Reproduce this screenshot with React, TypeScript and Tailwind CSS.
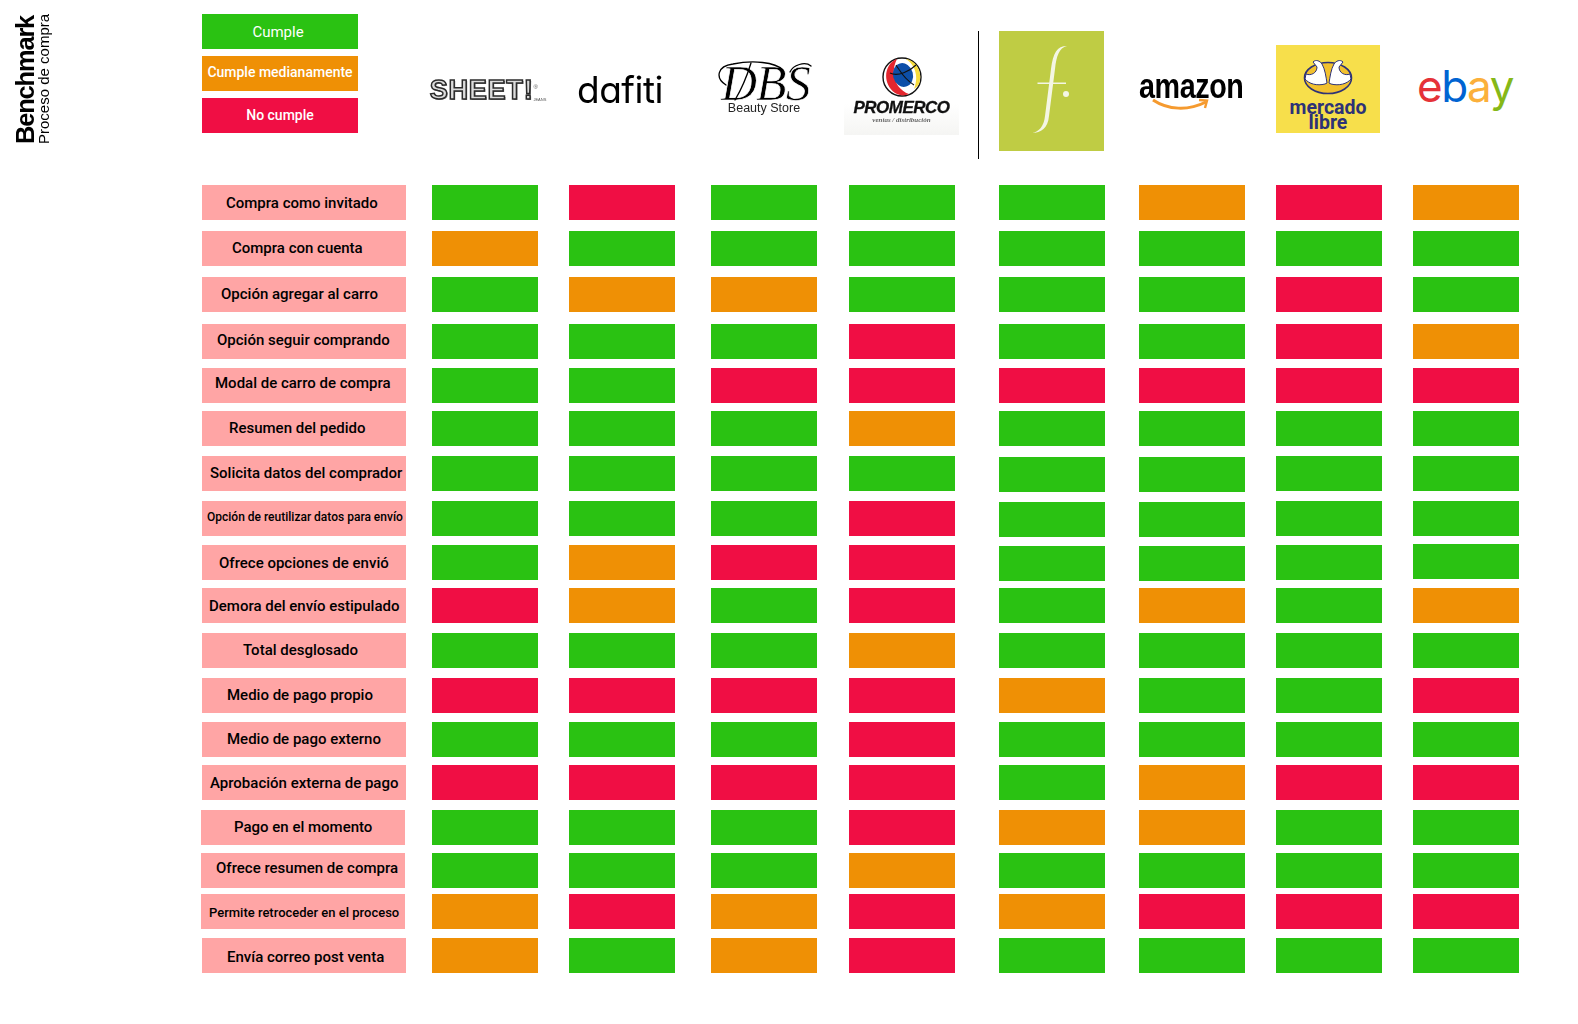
import React from 'react';

type Status = 'G' | 'O' | 'R';

const statusBg: Record<Status, string> = {
  G: 'bg-[#2AC212]',
  O: 'bg-[#EF9005]',
  R: 'bg-[#F00E44]',
};

// margin left of each brand column, they are not evenly spaced
const colGaps = ['ml-[26px]', 'ml-[31px]', 'ml-[36px]', 'ml-[32px]', 'ml-[44px]', 'ml-[34px]', 'ml-[31px]', 'ml-[31px]'];

type Row = {
  label: string;
  top: string;
  text: string;
  cells: string;
  left?: string;
  nudge?: Record<number, string>;
};

const rows: Row[] = [
  { label: 'Compra como invitado', top: 'mt-0', text: 'pl-[24px] pt-[2px] text-[15px]', cells: 'GRGGGORO' },
  { label: 'Compra con cuenta', top: 'mt-[11px]', text: 'pl-[30px] text-[15px]', cells: 'OGGGGGGG' },
  { label: 'Opción agregar al carro', top: 'mt-[11px]', text: 'pl-[19px] pb-[1px] text-[15px]', cells: 'GOOGGGRG' },
  { label: 'Opción seguir comprando', top: 'mt-[12px]', text: 'pl-[15px] pb-[2px] text-[15px]', cells: 'GGGRGGRO' },
  { label: 'Modal de carro de compra', top: 'mt-[9px]', text: 'pl-[13px] pb-[5px] text-[15px]', cells: 'GGRRRRRR' },
  { label: 'Resumen del pedido', top: 'mt-[8px]', text: 'pl-[27px] text-[15px]', cells: 'GGGOGGGG' },
  { label: 'Solicita datos del comprador', top: 'mt-[10px]', text: 'pl-[8px] text-[15px]', cells: 'GGGGGGGG', nudge: { 4: 'mt-px', 5: 'mt-px' } },
  { label: 'Opción de reutilizar datos para envío', top: 'mt-[10px]', text: 'pl-[5px] pb-[4px] text-[12px]', cells: 'GGGRGGGG', nudge: { 4: 'mt-px', 5: 'mt-px' } },
  { label: 'Ofrece opciones de envió', top: 'mt-[9px]', text: 'pl-[17px] pt-[1px] text-[15px]', cells: 'GORRGGGG', nudge: { 4: 'mt-px', 5: 'mt-px', 7: '-mt-px' } },
  { label: 'Demora del envío estipulado', top: 'mt-[8px]', text: 'pl-[7px] pt-[1px] text-[15px]', cells: 'ROGRGOGO' },
  { label: 'Total desglosado', top: 'mt-[10px]', text: 'pl-[41px] pb-[1px] text-[15px]', cells: 'GGGOGGGG' },
  { label: 'Medio de pago propio', top: 'mt-[10px]', text: 'pl-[25px] text-[15px]', cells: 'RRRROGGR' },
  { label: 'Medio de pago externo', top: 'mt-[9px]', text: 'pl-[25px] text-[15px]', cells: 'GGGRGGGG' },
  { label: 'Aprobación externa de pago', top: 'mt-[8px]', text: 'pl-[8px] pt-[1px] text-[15px]', cells: 'RRRRGORR' },
  { label: 'Pago en el momento', top: 'mt-[10px]', text: 'pl-[33px] pb-[1px] text-[15px]', cells: 'GGGROOGG', left: '-ml-px' },
  { label: 'Ofrece resumen de compra', top: 'mt-[8px]', text: 'pl-[15px] pb-[4px] text-[15px]', cells: 'GGGOGGGG', left: '-ml-px' },
  { label: 'Permite retroceder en el proceso', top: 'mt-[6px]', text: 'pl-[8px] pt-[3px] text-[13px]', cells: 'ORORORRR', left: '-ml-px' },
  { label: 'Envía correo post venta', top: 'mt-[9px]', text: 'pl-[25px] pt-[4px] text-[15px]', cells: 'OGORGGGG' },
];

const Legend = ({ className, text }: { className: string; text: string }) => (
  <div className={`h-[35px] flex items-center justify-center text-white ${className}`}>{text}</div>
);

const SheetLogo = () => (
  <div className="w-[106px] mt-[60px] flex items-end justify-center translate-x-[3px] blur-[0.4px] whitespace-nowrap">
    <span className="font-['Liberation_Sans',sans-serif] font-bold text-[27px] leading-[32px] text-[#dcdcdc] tracking-[0.8px] [-webkit-text-stroke:1.5px_#2b2b2b] [text-shadow:1px_1px_0_#777]">SHEET!</span>
    <span className="flex flex-col items-start font-['Liberation_Sans',sans-serif] text-[#555]">
      <span className="text-[6px] leading-[14px]">®</span>
      <span className="text-[4px] leading-[12px]">JEANS</span>
    </span>
  </div>
);

const DafitiLogo = () => (
  <div className="w-[106px] mt-[52px] flex justify-center -translate-x-[2px]">
    <span className="font-['Inter',sans-serif] text-[37px] leading-[48px] tracking-[-0.5px] text-black [font-feature-settings:'cv11'] blur-[0.3px]">dafiti</span>
  </div>
);

const DbsLogo = () => (
  <div className="w-[106px] mt-[46px] flex flex-col items-center blur-[0.3px]">
    <div className="relative w-[94px] h-[43px]">
      <span className="absolute left-[4px] top-[-6px] font-['Liberation_Serif',serif] italic text-[50px] leading-[58px] tracking-[-1px] text-black [-webkit-text-stroke:0.7px_#fff]">DBS</span>
      <svg className="absolute inset-0 overflow-visible" viewBox="0 0 94 44" fill="none" stroke="#000" strokeWidth="1.3" strokeLinecap="round">
        <path d="M9 25C-2 18 0 6 16 4C36 0 58 2 66 10" />
        <path d="M34 3C30 16 24 30 18 40" />
        <path d="M94 6C88 1 76 5 73 12" />
      </svg>
    </div>
    <span className="font-['Liberation_Sans',sans-serif] text-[12.5px] leading-[14px] text-[#222] -mt-[2px]">Beauty Store</span>
  </div>
);

const PromercoLogo = () => (
  <div className="w-[115px] h-[78px] mt-[43px] flex flex-col items-center bg-gradient-to-b from-white from-60% to-[#f5f5f3] blur-[0.2px]">
    <svg className="w-[40px] h-[40px] shrink-0" viewBox="0 0 40 40">
      <circle cx="20" cy="20" r="19" fill="#fff" stroke="#111" strokeWidth="1.4" />
      <path d="M15 2C3 6-1 26 13 36c5 3 10 3 14 1C15 33 7 18 15 2Z" fill="#E3262E" />
      <path d="M24 2c11 2 17 14 13 25-2 3-4 4-5 5C37 19 33 8 24 2Z" fill="#F7DC3C" />
      <ellipse cx="21" cy="18" rx="10" ry="12" fill="#0D4FA8" transform="rotate(-15 21 18)" />
      <path d="M8 16C16 20 28 14 34 8M14 8c4 6 8 14 18 20" fill="none" stroke="#111" strokeWidth="1.1" />
    </svg>
    <span className="font-['Liberation_Sans',sans-serif] italic font-bold text-[17px] leading-[18px] tracking-[-0.5px] text-[#111] mt-[2px] [-webkit-text-stroke:0.3px_#111]">PROMERCO</span>
    <span className="font-['Liberation_Serif',serif] italic font-bold text-[7px] leading-[8px] text-[#666] -mt-[1px]">ventas / distribución</span>
  </div>
);

const FalabellaLogo = () => (
  <div className="w-[105px] h-[120px] mt-[17px] bg-[#BFCC44] flex items-center justify-center">
    <svg className="w-[105px] h-[120px]" viewBox="0 0 105 120" fill="#F4F6E4">
      <path d="M68 15C58 15 54 22 52 38L46 85C45 95 40 101 33 102C42 102 49 97 50 85L56 38C57.5 25 60 17 68 15Z" />
      <rect x="38.5" y="51.5" width="28.5" height="1.5" />
      <circle cx="67" cy="63" r="3" />
    </svg>
  </div>
);

const AmazonLogo = () => (
  <div className="w-[106px] mt-[54px] flex flex-col items-start">
    <span className="font-['Liberation_Sans',sans-serif] font-bold text-[35px] leading-[36px] text-black origin-left scale-x-[0.82] tracking-[-0.5px] whitespace-nowrap">amazon</span>
    <svg className="w-[60px] h-[14px] ml-[13px] -mt-[6px]" viewBox="0 0 60 14" fill="none" stroke="#F59A2F" strokeWidth="3">
      <path d="M1 2C16 12 36 13 54 4" />
      <path d="M47 2L55 2.5L53 10" strokeWidth="2.4" />
    </svg>
  </div>
);

const MercadoLogo = () => (
  <div className="w-[104px] h-[88px] mt-[31px] bg-[#F7DF4B] flex flex-col items-center pt-[14px]">
    <svg className="w-[50px] h-[36px] shrink-0" viewBox="0 0 50 36">
      <ellipse cx="25" cy="19" rx="23.5" ry="15.5" fill="#F2C12E" stroke="#2D3277" strokeWidth="1.6" />
      <path d="M3 15C8 17 14 14 14 8L10 3C13 0 17 2 19 5C22 10 23 18 24 24L22 25C14 27 6 25 2 20Z" fill="#fff" stroke="#2D3277" strokeWidth="1" />
      <path d="M47 15C42 17 36 14 36 8L40 3C37 0 33 2 31 5C28 10 27 18 26 24L28 25C36 27 44 25 48 20Z" fill="#fff" stroke="#2D3277" strokeWidth="1" />
    </svg>
    <span className="font-['Roboto',sans-serif] font-bold text-[19.5px] leading-[15px] text-[#2D3277] mt-[5px]">mercado</span>
    <span className="font-['Roboto',sans-serif] font-bold text-[19.5px] leading-[15px] text-[#2D3277]">libre</span>
  </div>
);

const EbayLogo = () => (
  <div className="w-[106px] mt-[47px] flex justify-center -translate-x-[1px]">
    <span className="font-['Inter',sans-serif] text-[44px] leading-[50px] tracking-[-1.5px]">
      <span className="text-[#E53238]">e</span>
      <span className="text-[#0064D2]">b</span>
      <span className="text-[#FBB03B]">a</span>
      <span className="text-[#86B817]">y</span>
    </span>
  </div>
);

const App = () => {
  return (
    <div className="min-h-screen bg-white flex font-['Roboto',sans-serif] text-black">
      <div className="w-[202px] shrink-0 pt-[14px] pl-[13px]">
        <div className="h-[130px] flex flex-col [writing-mode:vertical-rl] rotate-180 font-['Liberation_Sans',sans-serif] whitespace-nowrap">
          <span className="font-bold text-[25.5px] leading-[24px] tracking-[-1.2px]">Benchmark</span>
          <span className="text-[15px] leading-[14px]">Proceso de compra</span>
        </div>
      </div>

      <div className="flex-1 flex flex-col pt-[14px]">
        <div className="h-[171px] flex items-start">
          <div className="w-[156px] flex flex-col gap-[7px] shrink-0">
            <Legend className="bg-[#2AC212] text-[15px] pr-[4px] pt-[2px]" text="Cumple" />
            <Legend className="bg-[#EF9005] text-[14px] font-medium pb-[2px]" text="Cumple medianamente" />
            <Legend className="bg-[#F00E44] text-[14px] font-medium" text="No cumple" />
          </div>
          <div className="ml-[74px]"><SheetLogo /></div>
          <div className="ml-[31px]"><DafitiLogo /></div>
          <div className="ml-[36px]"><DbsLogo /></div>
          <div className="ml-[27px]"><PromercoLogo /></div>
          <div className="w-px h-[128px] mt-[17px] ml-[19px] bg-black" />
          <div className="ml-[20px]"><FalabellaLogo /></div>
          <div className="ml-[35px]"><AmazonLogo /></div>
          <div className="ml-[31px]"><MercadoLogo /></div>
          <div className="ml-[33px]"><EbayLogo /></div>
        </div>

        <div className="flex flex-col">
          {rows.map((row) => (
            <div key={row.label} className={`flex h-[35px] ${row.top}`}>
              <div className={`w-[204px] h-[35px] shrink-0 bg-[#FFA5A5] flex items-center font-medium whitespace-nowrap ${row.left ?? ''} ${row.text}`}>
                {row.label}
              </div>
              {row.left && <div className="w-px shrink-0" />}
              {row.cells.split('').map((c, i) => (
                <div
                  key={i}
                  className={`w-[106px] h-[35px] shrink-0 ${colGaps[i]} ${statusBg[c as Status]} ${row.nudge?.[i] ?? ''}`}
                />
              ))}
            </div>
          ))}
        </div>
      </div>
    </div>
  );
};

export default App;
